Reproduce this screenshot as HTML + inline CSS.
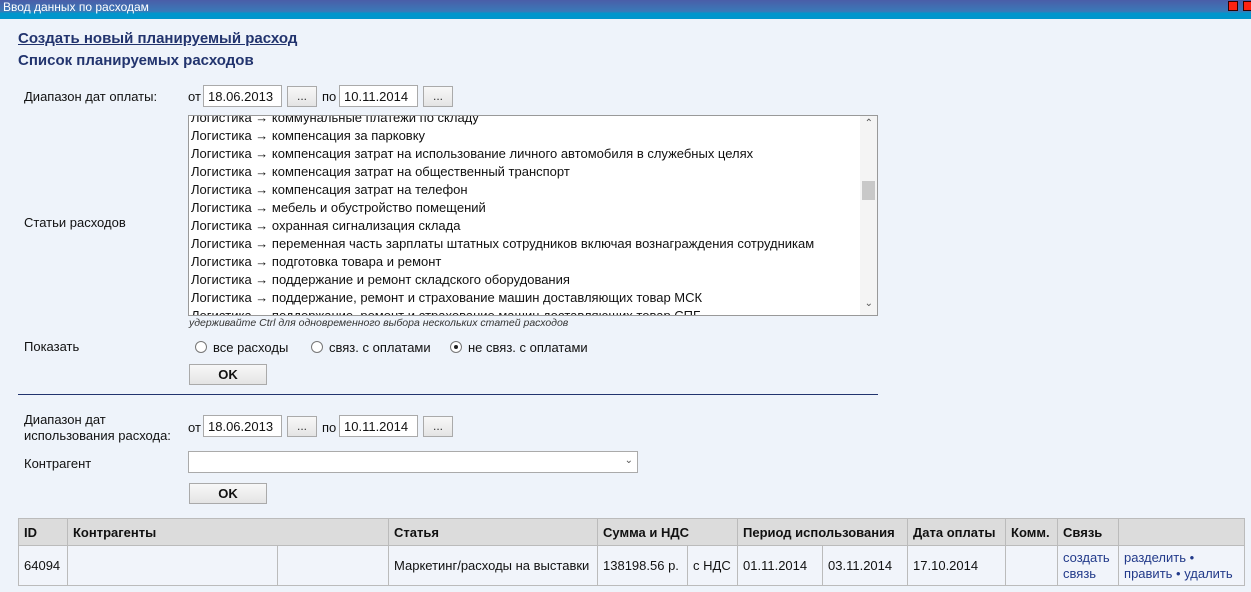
<!DOCTYPE html>
<html><head><meta charset="utf-8"><style>
*{box-sizing:border-box;margin:0;padding:0}
body{width:1251px;height:592px;overflow:hidden;background:#eef3fa;font-family:"Liberation Sans",Arial,sans-serif;font-size:13px;color:#111;position:relative}
.a{position:absolute;white-space:nowrap}
.bar{left:0;top:0;width:1251px;height:19px;background:linear-gradient(#4a5ea8 0,#3a7ab8 60%,#0096cc 70%,#0096cc 100%)}
.inp{position:absolute;height:22px;background:#fff;border:1px solid #aaa;padding:3px 0 0 4px;font-size:13px}
.btn{position:absolute;height:21px;background:linear-gradient(#f8f8f8,#e4e4e4);border:1px solid #aaa;text-align:center;font-size:12px;color:#333;line-height:19px}
.ok{font-weight:bold;color:#111;font-size:13px}
.rad{position:absolute;width:12px;height:12px;border:1px solid #777;border-radius:50%;background:#fff}
table{position:absolute;left:18px;top:518px;border-collapse:collapse;font-size:13px;table-layout:fixed;width:1226px}
td,th{border:1px solid #bbb;padding:0 5px;text-align:left;white-space:nowrap;overflow:hidden}
th{background:#dcdcdc;height:27px;font-weight:bold}
td{height:40px;background:#f1f4fa}
</style></head><body>
<div class="a bar"></div>
<div class="a" style="left:3px;top:0;color:#fff;font-size:12px">Ввод данных по расходам</div>
<div class="a" style="left:1228px;top:1px;width:10px;height:10px;background:#f21;border:1px solid #300"></div>
<div class="a" style="left:1243px;top:1px;width:10px;height:10px;background:#f21;border:1px solid #300"></div>
<div class="a" style="left:18px;top:30px;font-size:15px;font-weight:bold;color:#22346e;text-decoration:underline">Создать новый планируемый расход</div>
<div class="a" style="left:18px;top:52px;font-size:15px;font-weight:bold;color:#22346e">Список планируемых расходов</div>

<div class="a" style="left:24px;top:89px">Диапазон дат оплаты:</div>
<div class="a" style="left:188px;top:89px">от</div>
<div class="inp" style="left:203px;top:85px;width:79px">18.06.2013</div>
<div class="btn" style="left:287px;top:86px;width:30px">...</div>
<div class="a" style="left:322px;top:89px">по</div>
<div class="inp" style="left:339px;top:85px;width:79px">10.11.2014</div>
<div class="btn" style="left:423px;top:86px;width:30px">...</div>

<div class="a" style="left:24px;top:215px">Статьи расходов</div>
<div class="a" style="left:188px;top:115px;width:690px;height:201px;background:#fff;border:1px solid #999;overflow:hidden">
<div style="position:absolute;left:2px;top:-7px;line-height:18px;font-size:13px">
Логистика → коммунальные платежи по складу<br>Логистика → компенсация за парковку<br>Логистика → компенсация затрат на использование личного автомобиля в служебных целях<br>Логистика → компенсация затрат на общественный транспорт<br>Логистика → компенсация затрат на телефон<br>Логистика → мебель и обустройство помещений<br>Логистика → охранная сигнализация склада<br>Логистика → переменная часть зарплаты штатных сотрудников включая вознаграждения сотрудникам<br>Логистика → подготовка товара и ремонт<br>Логистика → поддержание и ремонт складского оборудования<br>Логистика → поддержание, ремонт и страхование машин доставляющих товар МСК<br>Логистика → поддержание, ремонт и страхование машин доставляющих товар СПБ</div>
<div style="position:absolute;right:0;top:0;width:17px;height:199px;background:#f4f4f4"></div>
<div style="position:absolute;right:2px;top:65px;width:13px;height:19px;background:#c8c8c8"></div>
<div style="position:absolute;right:4px;top:2px;font-size:10px;color:#555">&#8963;</div>
<div style="position:absolute;right:4px;top:182px;font-size:10px;color:#555">&#8964;</div>
</div>
<div class="a" style="left:189px;top:317px;font-size:10.5px;font-style:italic;color:#333">удерживайте Ctrl для одновременного выбора нескольких статей расходов</div>

<div class="a" style="left:24px;top:339px">Показать</div>
<div class="rad" style="left:195px;top:341px"></div>
<div class="a" style="left:213px;top:340px">все расходы</div>
<div class="rad" style="left:311px;top:341px"></div>
<div class="a" style="left:329px;top:340px">связ. с оплатами</div>
<div class="rad" style="left:450px;top:341px"><div style="position:absolute;left:3px;top:3px;width:4px;height:4px;border-radius:50%;background:#222"></div></div>
<div class="a" style="left:468px;top:340px">не связ. с оплатами</div>
<div class="btn ok" style="left:189px;top:364px;width:78px">OK</div>
<div class="a" style="left:18px;top:394px;width:860px;height:1px;background:#22346e"></div>

<div class="a" style="left:24px;top:412px;line-height:16px">Диапазон дат<br>использования расхода:</div>
<div class="a" style="left:188px;top:420px">от</div>
<div class="inp" style="left:203px;top:415px;width:79px">18.06.2013</div>
<div class="btn" style="left:287px;top:416px;width:30px">...</div>
<div class="a" style="left:322px;top:420px">по</div>
<div class="inp" style="left:339px;top:415px;width:79px">10.11.2014</div>
<div class="btn" style="left:423px;top:416px;width:30px">...</div>
<div class="a" style="left:24px;top:456px">Контрагент</div>
<div class="a" style="left:188px;top:451px;width:450px;height:22px;background:#fff;border:1px solid #aaa"><span style="position:absolute;right:4px;top:3px;font-size:10px;color:#555">&#8964;</span></div>
<div class="btn ok" style="left:189px;top:483px;width:78px">OK</div>

<table>
<colgroup><col style="width:49px"><col style="width:210px"><col style="width:111px"><col style="width:209px"><col style="width:90px"><col style="width:50px"><col style="width:85px"><col style="width:85px"><col style="width:98px"><col style="width:52px"><col style="width:61px"><col style="width:126px"></colgroup>
<tr><th>ID</th><th colspan="2">Контрагенты</th><th>Статья</th><th colspan="2">Сумма и НДС</th><th colspan="2">Период использования</th><th>Дата оплаты</th><th>Комм.</th><th>Связь</th><th></th></tr>
<tr><td>64094</td><td></td><td></td><td>Маркетинг/расходы на выставки</td><td>138198.56 р.</td><td>с НДС</td><td>01.11.2014</td><td>03.11.2014</td><td>17.10.2014</td><td></td><td style="color:#223a8a;line-height:16px">создать<br>связь</td><td style="color:#223a8a;line-height:16px">разделить •<br>править • удалить</td></tr>
</table>
</body></html>
